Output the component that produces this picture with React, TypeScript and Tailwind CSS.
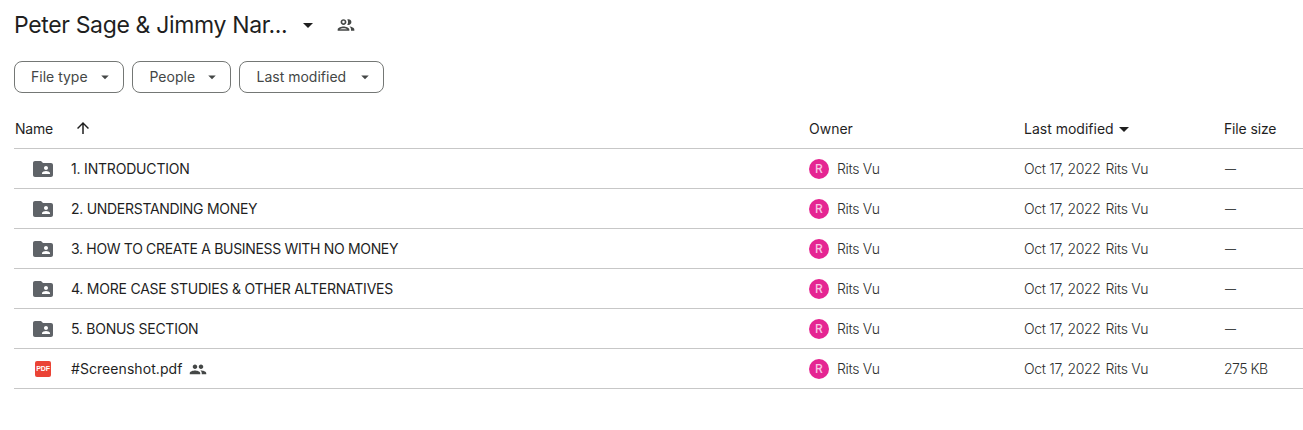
import type { ReactNode } from 'react';
import clsx from 'clsx';

interface DriveItem {
  name: string;
  tracking: string;
  kind: 'folder' | 'pdf';
  owner: string;
  modified: string;
  size?: string;
}

const base = { owner: 'Rits Vu', modified: 'Oct 17, 2022' };

const items: DriveItem[] = [
  { ...base, name: '1. INTRODUCTION', tracking: 'tracking-[-0.19px]', kind: 'folder' },
  { ...base, name: '2. UNDERSTANDING MONEY', tracking: 'tracking-[-0.29px]', kind: 'folder' },
  { ...base, name: '3. HOW TO CREATE A BUSINESS WITH NO MONEY', tracking: 'tracking-[-0.33px]', kind: 'folder' },
  { ...base, name: '4. MORE CASE STUDIES & OTHER ALTERNATIVES', tracking: 'tracking-[-0.23px]', kind: 'folder' },
  { ...base, name: '5. BONUS SECTION', tracking: 'tracking-[-0.26px]', kind: 'folder' },
  { ...base, name: '#Screenshot.pdf', tracking: 'tracking-[0.06px]', kind: 'pdf', size: '275 KB' },
];

const filters = [
  { label: 'File type', width: 'w-[110px]', padding: 'pl-4' },
  { label: 'People', width: 'w-[99px]', padding: 'pl-[16.5px]' },
  { label: 'Last modified', width: 'w-[145px]', padding: 'pl-[16.5px]' },
];

const columns = 'grid grid-cols-[795px_215px_200px_1fr] items-center border-b border-[#c7c7c7]';

function Icon({ className, children }: { className: string; children: ReactNode }) {
  return (
    <svg viewBox="0 0 24 24" fill="currentColor" className={clsx('shrink-0', className)}>
      {children}
    </svg>
  );
}

function Caret({ className }: { className: string }) {
  return (
    <Icon className={className}>
      <path d="M7 10l5 5 5-5z" />
    </Icon>
  );
}

function FolderIcon() {
  return (
    <Icon className="size-6 text-[#5f6368]">
      <path
        fillRule="evenodd"
        d="M20 6h-8l-2-2H4c-1.1 0-2 .9-2 2v12c0 1.1.9 2 2 2h16c1.1 0 2-.9 2-2V8c0-1.1-.9-2-2-2zm-5 3c1.1 0 2 .9 2 2s-.9 2-2 2-2-.9-2-2 .9-2 2-2zm4 8h-8v-1c0-1.33 2.67-2 4-2s4 .67 4 2v1z"
      />
    </Icon>
  );
}

function PdfIcon() {
  return (
    <span className="mx-1 flex size-4 shrink-0 items-center justify-center rounded-[2px] bg-[#ea4335] font-['Liberation_Sans',sans-serif] text-[7px] leading-none font-bold tracking-[-0.1px] text-white">
      PDF
    </span>
  );
}

export default function App() {
  return (
    <div className="h-[430px] overflow-hidden bg-white pl-3.5 font-[Inter,sans-serif] text-sm text-[#1f1f1f]">
      {/* Title */}
      <header className="flex h-[50px] items-center">
        <h1 className="w-[282px] text-[23px] tracking-[-0.35px] whitespace-nowrap">Peter Sage &amp; Jimmy Nar...</h1>
        <Caret className="size-6" />
        <Icon className="ml-4 size-5 text-[#444746]">
          <path d="M9 13.75c-2.34 0-7 1.17-7 3.5V19h14v-1.75c0-2.33-4.66-3.5-7-3.5zM4.34 17c.84-.58 2.87-1.25 4.66-1.25s3.82.67 4.66 1.25H4.34zM9 12c1.93 0 3.5-1.57 3.5-3.5S10.93 5 9 5 5.5 6.57 5.5 8.5 7.07 12 9 12zm0-5c.83 0 1.5.67 1.5 1.5S9.83 10 9 10s-1.5-.67-1.5-1.5S8.17 7 9 7zm7.04 6.81c1.16.84 1.96 1.96 1.96 3.44V19h4v-1.75c0-2.02-3.5-3.17-5.96-3.44zM15 12c1.93 0 3.5-1.57 3.5-3.5S16.93 5 15 5c-.54 0-1.04.13-1.5.35.63.89 1 1.98 1 3.15s-.37 2.26-1 3.15c.46.22.96.35 1.5.35z" />
        </Icon>
      </header>

      {/* Filters */}
      <div className="mt-[11px] flex gap-2">
        {filters.map((f) => (
          <button
            key={f.label}
            className={clsx(
              'flex h-8 items-center justify-between rounded-lg border border-[#747775] pr-[9px] whitespace-nowrap text-[#444746]',
              f.width,
              f.padding,
            )}
          >
            {f.label}
            <Caret className="size-[18px]" />
          </button>
        ))}
      </div>

      {/* Table */}
      <div className={clsx(columns, 'mt-4 h-10')}>
        <div className="flex items-center pl-px">
          <span className="w-[38px] tracking-[-0.25px]">Name</span>
          <Icon className="mb-0.5 ml-[21px] size-[18px]">
            <path d="M4 12l1.41 1.41L11 7.83V20h2V7.83l5.58 5.59L20 12l-8-8-8 8z" />
          </Icon>
        </div>
        <div>Owner</div>
        <div className="flex items-center">
          Last modified
          <Caret className="-ml-0.5 size-6" />
        </div>
        <div className="tracking-[-0.15px]">File size</div>
      </div>
      {items.map((item) => (
        <div key={item.name} className={clsx(columns, 'h-10')}>
          <div className="flex items-center pl-[17px]">
            {item.kind === 'folder' ? <FolderIcon /> : <PdfIcon />}
            <span className={clsx('ml-4', item.tracking)}>{item.name}</span>
            {item.kind === 'pdf' && (
              <Icon className="ml-[7px] size-[18px] text-[#444746]">
                <path d="M16 12c1.66 0 2.99-1.34 2.99-3S17.66 6 16 6s-3 1.34-3 3 1.34 3 3 3zm-8 0c1.66 0 2.99-1.34 2.99-3S9.66 6 8 6 5 7.34 5 9s1.34 3 3 3zm0 2c-2.33 0-7 1.17-7 3.5V19h14v-1.5c0-2.33-4.67-3.5-7-3.5zm8 0c-.29 0-.62.02-.97.05 1.16.84 1.97 1.97 1.97 3.45V19h6v-1.5c0-2.33-4.67-3.5-7-3.5z" />
              </Icon>
            )}
          </div>
          <div className="flex items-center gap-2 font-light tracking-[-0.33px] text-[#2d2f2e]">
            <span className="flex size-5 items-center justify-center rounded-full bg-[#e52592] text-xs font-medium tracking-normal text-[#f9c5e3]">
              R
            </span>
            {item.owner}
          </div>
          <div className="flex gap-[5px] font-light tracking-[-0.33px] text-[#2d2f2e]">
            <span>{item.modified}</span>
            <span>{item.owner}</span>
          </div>
          <div className="font-light tracking-[-0.5px] text-[#2d2f2e]">
            {item.size ?? <span className="ml-px block text-[11px]/[20px] font-normal text-[#444746]">—</span>}
          </div>
        </div>
      ))}
    </div>
  );
}
